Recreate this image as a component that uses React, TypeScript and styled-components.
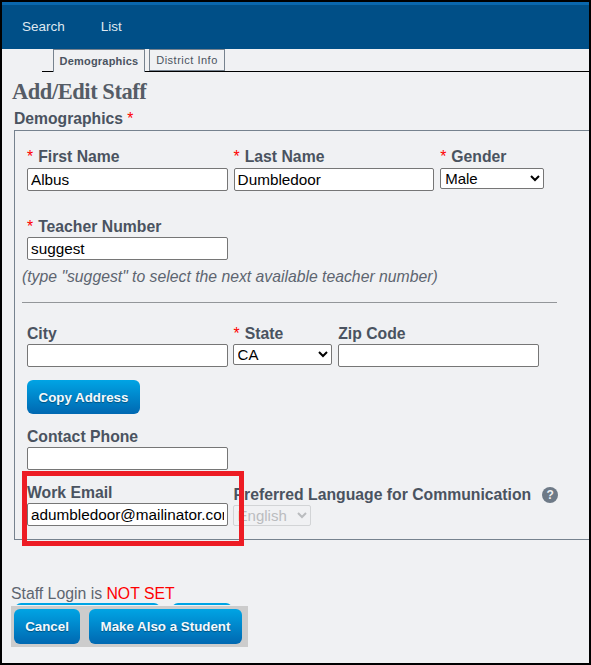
import React from "react";
import styled, { createGlobalStyle } from "styled-components";

const GlobalStyle = createGlobalStyle`
  html, body {
    margin: 0;
    padding: 0;
    background: #f0f1f3;
    font-family: "Liberation Sans", Arial, sans-serif;
  }
  * {
    box-sizing: border-box;
  }
`;

// Styled
const Frame = styled.div`
  position: relative;
  width: 591px;
  height: 665px;
  overflow: hidden;
  border: 2px solid #000;
  background: #f0f1f3;
  color: #4a5360;
`;
const TopBar = styled.nav`
  display: flex;
  align-items: center;
  gap: 36px;
  height: 47px;
  padding: 0 20px 1px;
  border-top: 3px solid #0a67ad;
  background: #004f87;
`;
const TopLink = styled.a`
  font-size: 13.5px;
  color: #dfe8f0;
`;
const TabBar = styled.div`
  display: flex;
  gap: 4px;
  height: 23px;
  margin-left: 40px;
  padding-left: 11px;
  border-bottom: 1px solid #000;
`;
const Tab = styled.div<{ $active?: boolean }>`
  display: flex;
  align-items: center;
  justify-content: center;
  width: ${({ $active }) => ($active ? "92px" : "76px")};
  height: ${({ $active }) => ($active ? "23px" : "22px")};
  border: 1px solid #76828e;
  border-bottom: ${({ $active }) => ($active ? "none" : "1px solid #76828e")};
  background: #f0f1f3;
  font-size: 11px;
  font-weight: ${({ $active }) => ($active ? 700 : 400)};
  letter-spacing: ${({ $active }) => ($active ? "0.2px" : "0.5px")};
  color: #4a5360;
`;
const Title = styled.h1`
  margin: 8px 0 0 10px;
  font-family: "Liberation Serif", serif;
  font-size: 22.5px;
  line-height: 24px;
  font-weight: 700;
  letter-spacing: -0.45px;
  color: #555c66;
`;
const SectionLabel = styled.div`
  margin: 6px 0 0 12px;
  font-size: 15.7px;
  line-height: 18px;
  font-weight: 700;
`;
const Req = styled.span`
  font-weight: 400;
  color: #f00;
`;
const Fieldset = styled.section`
  height: 410px;
  margin: 2px -2px 0 12px;
  padding: 17px 0 0 12px;
  border: 1px solid #76828e;
  border-right: none;
`;
const Label = styled.label`
  height: 19px;
  font-size: 15.75px;
  line-height: 18px;
  font-weight: 700;
  white-space: nowrap;
  color: #4a5360;

  ${Req} {
    margin-right: 5px;
  }
`;
const Row = styled.div<{ $top?: number; $first?: boolean }>`
  display: flex;
  align-items: flex-start;
  gap: 6px;
  margin-top: ${({ $top }) => $top ?? 0}px;

  ${Label} {
    height: ${({ $first }) => ($first ? 20 : 19)}px;
  }
`;
const Field = styled.div`
  display: flex;
  flex-direction: column;
`;
const TextInput = styled.input`
  width: 200.6px;
  height: 23px;
  padding: 0 3px;
  border: 1px solid #767676;
  border-radius: 2px;
  background: #fff;
  font-family: "Liberation Sans", Arial, sans-serif;
  font-size: 15.3px;
  color: #000;
  outline: none;
`;
const Select = styled.select<{ $w: number; $shift?: number }>`
  width: ${({ $w }) => $w}px;
  height: 21px;
  margin-left: ${({ $shift }) => $shift ?? 0}px;
  padding: 0;
  border: 1px solid #767676;
  border-radius: 2px;
  background: #fff;
  font-family: "Liberation Sans", Arial, sans-serif;
  font-size: 15px;
  color: #000;
  &:disabled {
    border-color: #c6c8ca;
    background: #f0f1f3;
    color: #a4a6a9;
  }
`;
const Hint = styled.p`
  margin: 8px 0 0 -5px;
  font-size: 15.75px;
  line-height: 18px;
  font-style: italic;
  color: #5d6570;
`;
const Divider = styled.hr`
  width: 535px;
  height: 1px;
  margin: 16px 0 22px -5px;
  border: none;
  background: #939699;
`;
const BlueButton = styled.button<{ $w: number }>`
  width: ${({ $w }) => $w}px;
  height: 35px;
  padding: 0;
  border: none;
  border-radius: 6px;
  background: linear-gradient(#00a4e4, #0068b1);
  font-family: "Liberation Sans", Arial, sans-serif;
  font-size: 13.33px;
  font-weight: 700;
  white-space: nowrap;
  color: #f4f9fc;
  text-shadow: 0 1px 1px rgba(0, 0, 0, 0.35);
`;
const CopyButton = styled(BlueButton)`
  display: block;
  height: 34px;
  margin-top: 13px;
`;
const HelpIcon = styled.span`
  display: inline-flex;
  align-items: center;
  justify-content: center;
  width: 16px;
  height: 16px;
  margin-left: 11px;
  border-radius: 50%;
  background: #6e7a87;
  vertical-align: 1px;
  font-size: 12px;
  font-weight: 700;
  color: #f0f1f3;
`;
const PrefField = styled(Field)`
  padding-top: 2px;
`;
const LoginStatus = styled.div`
  margin: 45px 0 0 9px;
  font-size: 15.8px;
  line-height: 18px;
  color: #5d6570;
`;
const NotSet = styled.span`
  color: #f00;
`;
const HiddenButtons = styled.div`
  display: flex;
  gap: 12px;
  margin-left: 13px;
  height: 2px;
  overflow: hidden;
`;
const HiddenButton = styled.div<{ $w: number }>`
  width: ${({ $w }) => $w}px;
  height: 30px;
  border-radius: 6px;
  background: #00a4e4;
`;
// floats over the buttons under it
const ActionStrip = styled.div`
  position: absolute;
  left: 9px;
  top: 604px;
  display: flex;
  align-items: center;
  gap: 9px;
  width: 237px;
  height: 41px;
  padding-left: 3px;
  background: #ccc;
`;
// annotation drawn on top of the form
const Callout = styled.div`
  position: absolute;
  left: 20px;
  top: 469px;
  width: 222px;
  height: 75px;
  border: 5px solid #ed1c24;
`;

const App = () => {
  return (
    <>
      <GlobalStyle />
      <Frame>
        <TopBar>
          <TopLink>Search</TopLink>
          <TopLink>List</TopLink>
        </TopBar>
        <TabBar>
          <Tab $active>Demographics</Tab>
          <Tab>District Info</Tab>
        </TabBar>
        <Title>Add/Edit Staff</Title>
        <SectionLabel>
          Demographics <Req>*</Req>
        </SectionLabel>
        <Fieldset>
          <Row $first>
            <Field>
              <Label>
                <Req>*</Req>First Name
              </Label>
              <TextInput defaultValue="Albus" />
            </Field>
            <Field>
              <Label>
                <Req>*</Req>Last Name
              </Label>
              <TextInput defaultValue="Dumbledoor" />
            </Field>
            <Field>
              <Label>
                <Req>*</Req>Gender
              </Label>
              <Select $w={104} defaultValue="Male">
                <option>Male</option>
                <option>Female</option>
              </Select>
            </Field>
          </Row>
          <Row $top={27}>
            <Field>
              <Label>
                <Req>*</Req>Teacher Number
              </Label>
              <TextInput defaultValue="suggest" />
            </Field>
          </Row>
          <Hint>(type "suggest" to select the next available teacher number)</Hint>
          <Divider />
          <Row>
            <Field>
              <Label>City</Label>
              <TextInput />
            </Field>
            <Field>
              <Label>
                <Req>*</Req>State
              </Label>
              <Select $w={99.6} $shift={-1} defaultValue="CA">
                <option>CA</option>
              </Select>
            </Field>
            <Field>
              <Label>Zip Code</Label>
              <TextInput />
            </Field>
          </Row>
          <CopyButton $w={113}>Copy Address</CopyButton>
          <Row $top={14}>
            <Field>
              <Label>Contact Phone</Label>
              <TextInput />
            </Field>
          </Row>
          <Row $top={14}>
            <Field>
              <Label>Work Email</Label>
              <TextInput defaultValue="adumbledoor@mailinator.com" />
            </Field>
            <PrefField>
              <Label>
                Preferred Language for Communication
                <HelpIcon>?</HelpIcon>
              </Label>
              <Select $w={78} $shift={-1} disabled defaultValue="English">
                <option>English</option>
              </Select>
            </PrefField>
          </Row>
        </Fieldset>
        <LoginStatus>
          Staff Login is <NotSet>NOT SET</NotSet>
        </LoginStatus>
        <HiddenButtons>
          <HiddenButton $w={145} />
          <HiddenButton $w={60} />
        </HiddenButtons>
        <ActionStrip>
          <BlueButton $w={66}>Cancel</BlueButton>
          <BlueButton $w={153}>Make Also a Student</BlueButton>
        </ActionStrip>
        <Callout />
      </Frame>
    </>
  );
};

export default App;
